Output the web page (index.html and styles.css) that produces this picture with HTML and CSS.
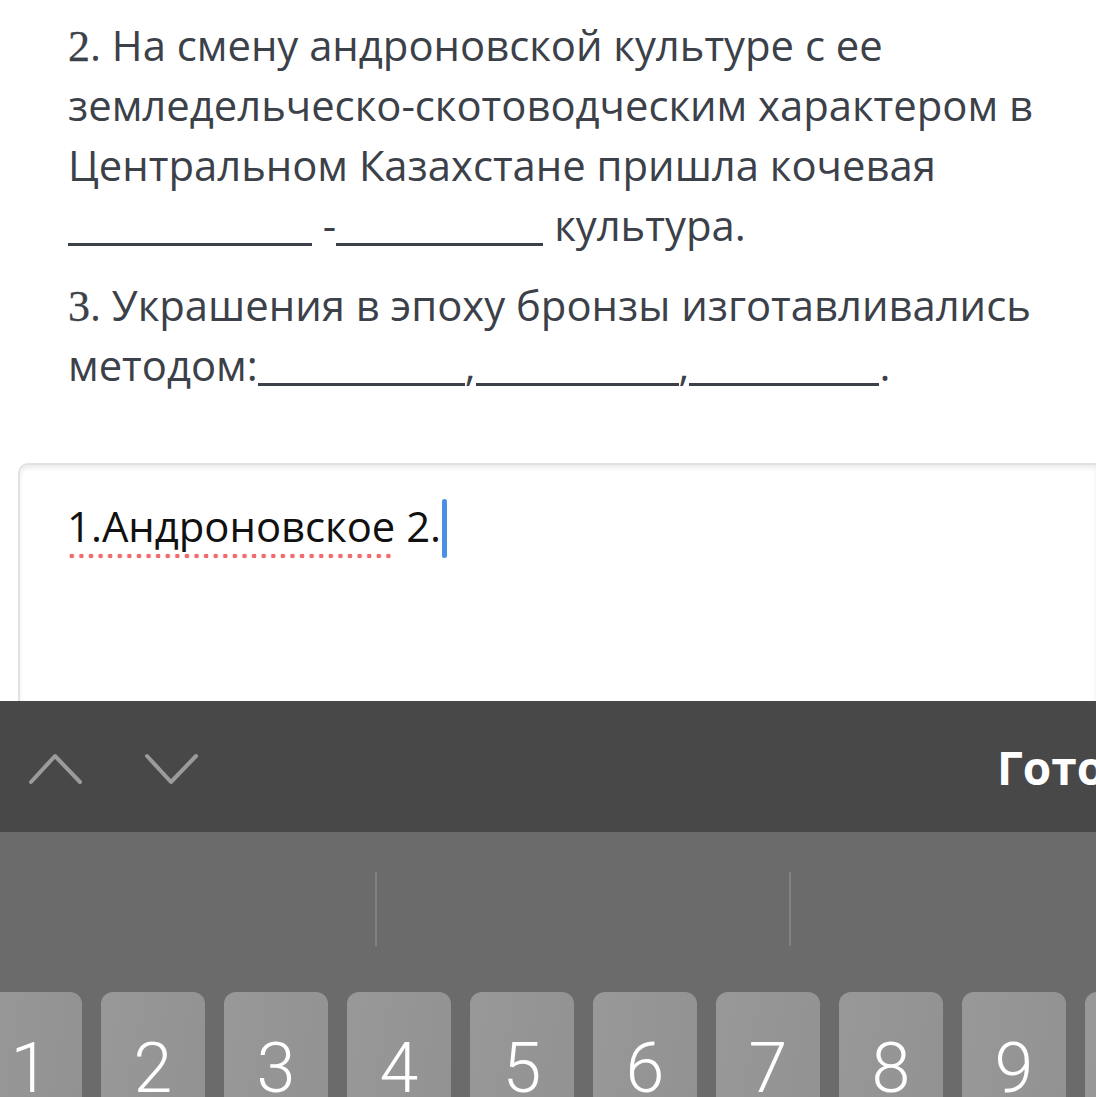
FILE: index.html
```html
<!DOCTYPE html>
<html lang="ru">
  <head>
    <meta charset="UTF-8" />
    <meta name="viewport" content="width=device-width, initial-scale=1.0" />
    <title>Задание</title>
    <link rel="stylesheet" href="styles.css">
  </head>
  <body>
    <div class="screen">
      <div class="task">
        <p class="item">
          <span class="num">2</span>. На смену андроновской культуре с ее
          земледельческо-скотоводческим характером в Центральном Казахстане
          пришла кочевая <span class="blank b-wide"></span> -<span class="blank b-mid"></span>
          культура.
        </p>
        <p class="item">
          <span class="num">3</span>. Украшения в эпоху бронзы изготавливались
          методом:<span class="blank b-m1"></span>,<span class="blank b-m2"></span>,<span class="blank b-m3"></span>.
        </p>
      </div>

      <div class="answer">
        <span class="typo">1.Андроновское</span> 2.<span class="caret"></span>
      </div>

      <div class="accessory">
        <div class="arrows">
          <svg class="chev" width="56" height="36" viewBox="0 0 56 36">
            <polyline points="3,31 27,5 52,31" />
          </svg>
          <svg class="chev" width="56" height="36" viewBox="0 0 56 36">
            <polyline points="3,5 27,31 52,5" />
          </svg>
        </div>
        <div class="done">Готово</div>
      </div>

      <div class="keyboard">
        <div class="suggestions">
          <div class="cell"></div>
          <div class="cell"></div>
          <div class="cell"></div>
        </div>
        <div class="keys">
          <div class="key">1</div>
          <div class="key">2</div>
          <div class="key">3</div>
          <div class="key">4</div>
          <div class="key">5</div>
          <div class="key">6</div>
          <div class="key">7</div>
          <div class="key">8</div>
          <div class="key">9</div>
          <div class="key">0</div>
        </div>
      </div>
    </div>
  </body>
</html>
```

FILE: styles.css
```css
html,
body {
  margin: 0;
  padding: 0;
  background: #ffffff;
}
.screen {
  width: 1096px;
  height: 1097px;
  overflow: hidden;
  display: flex;
  flex-direction: column;
}
.task {
  padding: 15px 0 0 68px;
  font-family: "Open Sans", sans-serif;
  font-size: 41.8px;
  line-height: 60px;
  color: #3c4149;
  flex-shrink: 0;
}
.item {
  margin: 0 0 20px 0;
  width: 1015px;
}
.num {
  font-family: "Liberation Serif", "DejaVu Serif", serif;
  font-size: 44px;
  line-height: 1;
  -webkit-text-stroke: 0.3px #3c4149;
}
.blank {
  display: inline-block;
  border-bottom: 3px solid #3c4149;
  vertical-align: -5px;
}
.b-wide {
  width: 244px;
}
.b-mid {
  width: 207px;
}
.b-m1 {
  width: 207px;
}
.b-m2 {
  width: 203px;
}
.b-m3 {
  width: 190px;
}
.answer {
  margin: 48px 0 0 18px;
  height: 205px;
  padding: 31px 0 0 47px;
  border: 2px solid #e2e2e2;
  border-right: none;
  border-bottom: none;
  border-radius: 10px 0 0 0;
  box-shadow: inset 0 3px 4px rgba(0, 0, 0, 0.08);
  font-family: "Open Sans", sans-serif;
  font-size: 41.8px;
  line-height: 60px;
  color: #111111;
  flex-shrink: 0;
}
.typo {
  padding-bottom: 5px;
  background-image: radial-gradient(circle, #f06c6c 2.1px, transparent 2.6px);
  background-size: 9.6px 6px;
  background-repeat: repeat-x;
  background-position: 0 100%;
}
.caret {
  display: inline-block;
  width: 5px;
  height: 59px;
  margin-left: 1px;
  background: #4a8fe3;
  border-radius: 3px;
  vertical-align: -16px;
}
.accessory {
  height: 131px;
  background: #484848;
  display: flex;
  align-items: center;
  flex-shrink: 0;
}
.arrows {
  display: flex;
  gap: 60px;
  padding-left: 28px;
  margin-top: 4px;
}
.chev polyline {
  fill: none;
  stroke: #9b9b9b;
  stroke-width: 4;
  stroke-linecap: round;
  stroke-linejoin: round;
}
.done {
  margin-left: auto;
  width: 99px;
  font-family: "Open Sans", sans-serif;
  font-weight: 700;
  font-size: 46px;
  color: #ffffff;
  white-space: nowrap;
}
.keyboard {
  flex: 1;
  background: #6b6b6b;
}
.suggestions {
  display: grid;
  grid-template-columns: 375px 414px 1fr;
  margin-top: 40px;
  height: 74px;
}
.cell + .cell {
  border-left: 2px solid #828282;
}
.keys {
  display: flex;
  gap: 19px;
  margin: 46px 0 0 -22px;
}
.key {
  flex: 0 0 104px;
  height: 130px;
  border-radius: 12px;
  background: linear-gradient(100deg, #989898, #929292);
  color: #ffffff;
  font-family: Roboto, "Liberation Sans", sans-serif;
  font-weight: 300;
  font-size: 70px;
  text-align: center;
  padding-top: 36px;
  line-height: 80px;
  box-sizing: border-box;
}
```
